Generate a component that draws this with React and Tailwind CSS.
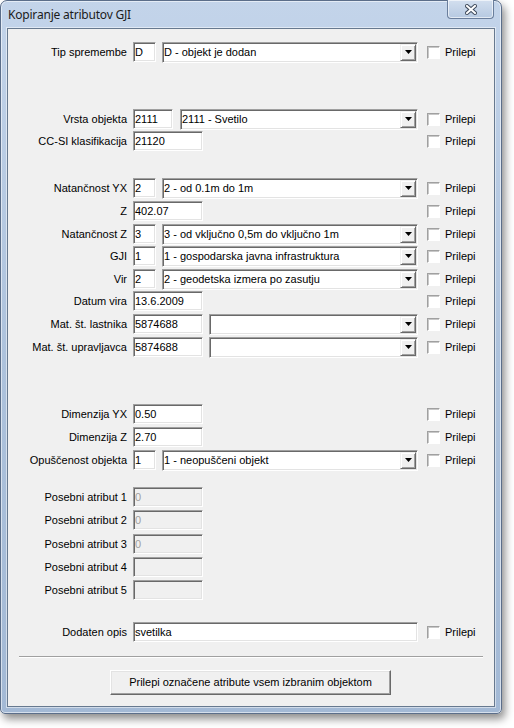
import React from "react";

const rows = [
  { mt: "mt-[13px]", label: "Tip spremembe", kind: "code", code: "D", text: "D - objekt je dodan" },
  { mt: "mt-[47px]", label: "Vrsta objekta", kind: "vrsta", code: "2111", text: "2111 - Svetilo" },
  { mt: "mt-[2px]", label: "CC-SI klasifikacija", kind: "input", value: "21120" },
  { mt: "mt-[27px]", label: "Natančnost YX", kind: "code", code: "2", text: "2 - od 0.1m do 1m" },
  { mt: "mt-[3px]", label: "Z", kind: "input", value: "402.07" },
  { mt: "mt-[3px]", label: "Natančnost Z", kind: "code", code: "3", text: "3 - od vključno 0,5m do vključno 1m" },
  { mt: "mt-[2px]", label: "GJI", kind: "code", code: "1", text: "1 - gospodarska javna infrastruktura" },
  { mt: "mt-[3px]", label: "Vir", kind: "code", code: "2", text: "2 - geodetska izmera po zasutju" },
  { mt: "mt-[2px]", label: "Datum vira", kind: "input", value: "13.6.2009" },
  { mt: "mt-[3px]", label: "Mat. št. lastnika", kind: "mat", value: "5874688" },
  { mt: "mt-[3px]", label: "Mat. št. upravljavca", kind: "mat", value: "5874688" },
  { mt: "mt-[47px]", label: "Dimenzija YX", kind: "input", value: "0.50" },
  { mt: "mt-[3px]", label: "Dimenzija Z", kind: "input", value: "2.70" },
  { mt: "mt-[3px]", label: "Opuščenost objekta", kind: "code", code: "1", text: "1 - neopuščeni objekt" },
  { mt: "mt-[17px]", label: "Posebni atribut 1", kind: "disabled", value: "0", nocheck: true },
  { mt: "mt-[3px]", label: "Posebni atribut 2", kind: "disabled", value: "0", nocheck: true },
  { mt: "mt-[4px]", label: "Posebni atribut 3", kind: "disabled", value: "0", nocheck: true },
  { mt: "mt-[3px]", label: "Posebni atribut 4", kind: "disabled", value: "", nocheck: true },
  { mt: "mt-[3px]", label: "Posebni atribut 5", kind: "disabled", value: "", nocheck: true },
  { mt: "mt-[22px]", label: "Dodaten opis", kind: "wide", value: "svetilka" },
];

// sunken 3D edit box, classic windows look
function Edit({ value, className = "", disabled = false }) {
  return (
    <div
      className={`h-[20px] flex items-center pl-[1px] border border-t-[#a0a0a0] border-l-[#a0a0a0] border-r-white border-b-white shadow-[inset_1px_1px_0_#696969,inset_-1px_-1px_0_#e3e3e3] whitespace-nowrap overflow-hidden ${
        disabled ? "bg-[#f0f0f0] text-[#a0a0a0]" : "bg-white text-black"
      } ${className}`}
    >
      {value}
    </div>
  );
}

function Combo({ text, className = "" }) {
  return (
    <div
      className={`h-[21px] flex items-center pl-[1px] bg-white border border-t-[#a0a0a0] border-l-[#a0a0a0] border-r-white border-b-white shadow-[inset_1px_1px_0_#696969,inset_-1px_-1px_0_#e3e3e3] ${className}`}
    >
      <span className="flex-1 whitespace-nowrap overflow-hidden">{text}</span>
      <div className="w-[16px] h-[17px] mr-[1px] flex items-center justify-center bg-[#f0f0f0] border border-t-[#f0f0f0] border-l-[#f0f0f0] border-r-[#696969] border-b-[#696969] shadow-[inset_1px_1px_0_#ffffff,inset_-1px_-1px_0_#a0a0a0]">
        <svg width="7" height="4" viewBox="0 0 7 4">
          <polygon points="0,0 7,0 3.5,4" fill="#000" />
        </svg>
      </div>
    </div>
  );
}

function Check() {
  return (
    <div className="flex items-center ml-[9px]">
      <div className="w-[13px] h-[13px] bg-white border border-t-[#a0a0a0] border-l-[#a0a0a0] border-r-white border-b-white shadow-[inset_1px_1px_0_#c8c8c8]" />
      <span className="ml-[5px]">Prilepi</span>
    </div>
  );
}

function Field({ r }) {
  switch (r.kind) {
    case "code":
      return (
        <div className="flex items-center w-[285px] gap-[6px]">
          <Edit value={r.code} className="w-[23px]" />
          <Combo text={r.text} className="w-[256px]" />
        </div>
      );
    case "vrsta":
      return (
        <div className="flex items-center w-[285px] gap-[7px]">
          <Edit value={r.code} className="w-[40px]" />
          <Combo text={r.text} className="w-[238px]" />
        </div>
      );
    case "mat":
      return (
        <div className="flex items-center w-[285px] gap-[6px]">
          <Edit value={r.value} className="w-[70px]" />
          <Combo text="" className="w-[209px]" />
        </div>
      );
    case "wide":
      return (
        <div className="flex items-center w-[285px]">
          <Edit value={r.value} className="w-[285px]" />
        </div>
      );
    case "disabled":
      return (
        <div className="flex items-center w-[285px]">
          <Edit value={r.value} className="w-[70px]" disabled />
        </div>
      );
    default:
      return (
        <div className="flex items-center w-[285px]">
          <Edit value={r.value} className="w-[70px]" />
        </div>
      );
  }
}

export default function App() {
  return (
    <div className="w-[514px] h-[728px] bg-white font-['Liberation_Sans',Arial,sans-serif] text-[11px] text-black">
      {/* Window frame */}
      <div className="w-[502px] h-[714px] flex flex-col rounded-t-[7px] rounded-b-[5px] border border-[#5b6e8a] bg-linear-to-b from-[#c3d4ea] via-[#adc2dc] to-[#a3b9d5] shadow-[3px_5px_9px_rgba(0,0,0,0.45),inset_0_0_0_1px_rgba(255,255,255,0.55)] px-[6px] pb-[6px]">
        {/* Title bar */}
        <div className="h-[27px] flex items-start justify-between">
          <span className="mt-[5px] ml-[1px] font-['Noto_Sans',sans-serif] text-[12px] tracking-[-0.2px] text-[#1b1b1b]">
            Kopiranje atributov GJI
          </span>
          <div className="w-[47px] h-[19px] -mt-[1px] mr-[1px] flex items-center justify-center rounded-b-[4px] border border-t-0 border-[#6a7e9c] bg-linear-to-b from-[#d3dfef] to-[#b6c9e1] shadow-[inset_0_0_0_1px_rgba(255,255,255,0.6)]">
            <svg width="12" height="11" viewBox="0 0 12 11">
              <path d="M2 2 L10 9 M10 2 L2 9" stroke="#3e4a5c" strokeWidth="4" strokeLinecap="square" />
              <path d="M2 2 L10 9 M10 2 L2 9" stroke="#ffffff" strokeWidth="2" strokeLinecap="square" />
            </svg>
          </div>
        </div>

        {/* Client area */}
        <div className="flex-1 flex flex-col bg-[#f0f0f0] border border-[#67798f] shadow-[0_0_0_1px_rgba(255,255,255,0.5)]">
          {rows.map((r) => (
            <div key={r.label} className={`flex items-center h-[20px] ${r.mt}`}>
              <span className="w-[119px] text-right whitespace-nowrap">{r.label}</span>
              <div className="ml-[6px]">
                <Field r={r} />
              </div>
              {!r.nocheck && <Check />}
            </div>
          ))}

          {/* Separator */}
          <div className="mt-[14px] mx-[11px] h-[2px] border-t border-[#a0a0a0] border-b border-b-white bg-[#a0a0a0]" />

          <div className="mt-[12px] flex pl-[102px]">
            <button className="w-[281px] h-[25px] bg-[#f0f0f0] border border-t-white border-l-white border-r-[#696969] border-b-[#696969] shadow-[inset_-1px_-1px_0_#a0a0a0,inset_1px_1px_0_#e3e3e3] text-[11px]">
              Prilepi označene atribute vsem izbranim objektom
            </button>
          </div>
        </div>
      </div>
    </div>
  );
}
